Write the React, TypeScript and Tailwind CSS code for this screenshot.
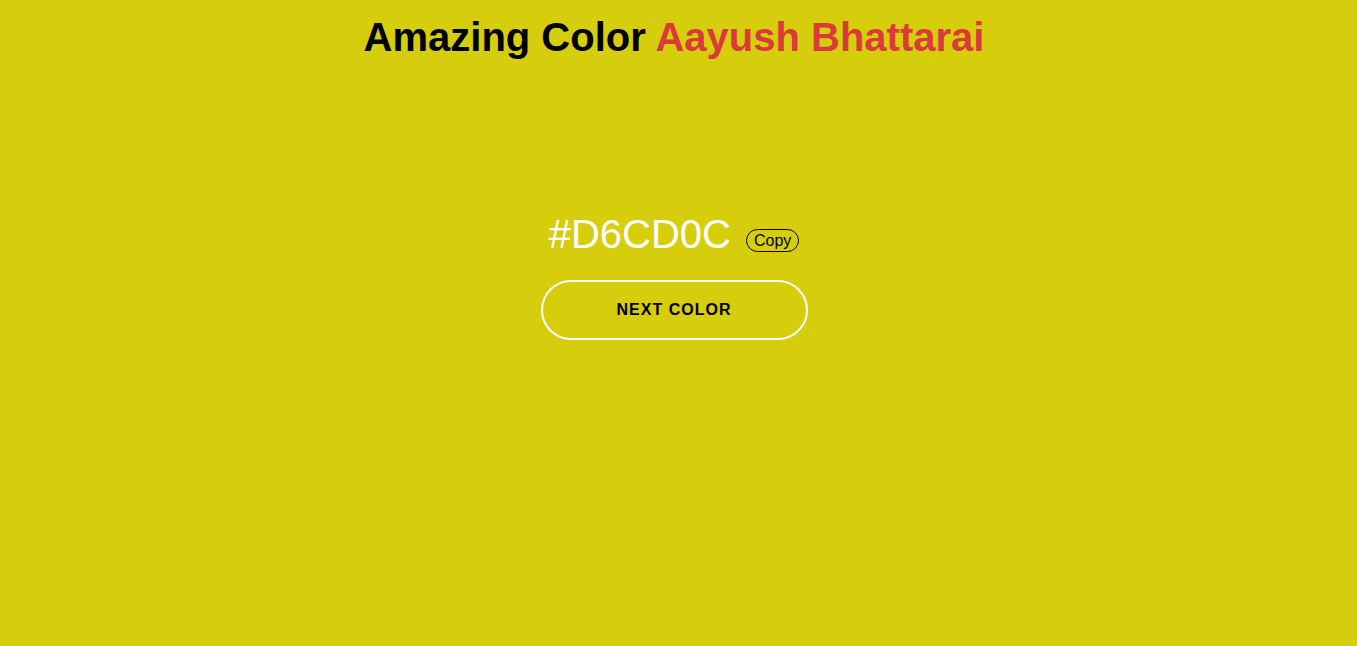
import React from 'react';

// Generador de color: muestra el hex actual y un boton para el siguiente
export default function App() {
  const hex = '#D6CD0C';
  return (
    <div className="min-h-screen w-full pr-[9px] bg-[#D6CD0C] font-['Liberation_Sans',Arial,sans-serif] flex flex-col items-center">
      <h1 className="mt-[13px] text-[40px] leading-[48px] font-bold text-black">
        Amazing Color <span className="text-[#DC3A3A]">Aayush Bhattarai</span>
      </h1>
      <div className="mt-[150px] flex flex-col items-center">
        <div className="flex items-start">
          <span className="text-[40px] leading-[46px] text-white">{hex}</span>
          <button className="ml-[15px] mt-[18px] px-[7px] h-[23px] text-[16px] leading-[20px] text-black border border-black rounded-full">
            Copy
          </button>
        </div>
        <button className="mt-[23px] w-[267px] h-[60px] rounded-full border-2 border-white text-[16px] font-bold tracking-[1px] text-black">
          NEXT COLOR
        </button>
      </div>
    </div>
  );
}
